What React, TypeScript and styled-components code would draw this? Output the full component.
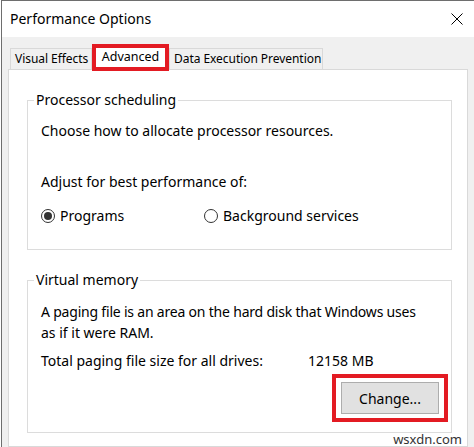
import React from 'react';
import styled, { createGlobalStyle } from 'styled-components';

const FONT = `"Noto Sans", "Open Sans", sans-serif`;
const RED = '#e31b23';

const Global = createGlobalStyle`
  html, body { margin: 0; padding: 0; background: #ffffff; }
  body { font-family: ${FONT}; color: #000; }
  * { box-sizing: border-box; }
`;

const Window = styled.div`
  width: 473px;
  height: 447px;
  margin-left: 1px;
  border-top: 1px solid #6e6e6e;
  border-left: 1px solid #6e6e6e;
  display: flex;
  flex-direction: column;
  overflow: hidden;
  background: #fff;
  font-size: 14px;
`;

const TitleBar = styled.div`
  height: 36px;
  flex: none;
  display: flex;
  align-items: center;
  justify-content: space-between;
  padding: 0 11px 0 8px;
  background: #fff;
`;

const Title = styled.span`
  font-size: 14px;
  line-height: 20px;
  color: #000;
`;

const Body = styled.div`
  flex: 1;
  display: flex;
  flex-direction: column;
  background: #f0f0f0;
  padding: 7px 6px 0 6px;
`;

const TabRow = styled.div`
  display: flex;
  align-items: flex-end;
  height: 25px;
  padding-left: 2px;
  flex: none;
`;

const Tab = styled.div<{ $w: number }>`
  width: ${p => p.$w}px;
  height: 21px;
  border: 1px solid #d9d9d9;
  border-bottom: none;
  background: #f0f0f0;
  line-height: 20px;
  padding-left: 4px;
  white-space: nowrap;
  font-size: 12px;
  letter-spacing: -0.05px;
`;

const ActiveTab = styled.div<{ $w: number }>`
  position: relative;
  z-index: 1;
  width: ${p => p.$w}px;
  height: 27px;
  margin-bottom: -2px;
  border: 4px solid ${RED};
  background: #fff;
  line-height: 17px;
  text-align: center;
  white-space: nowrap;
  font-size: 12.5px;
`;

const Panel = styled.div`
  flex: 1;
  background: #fff;
  border: 1px solid #d9d9d9;
  padding: 21px 15px 0 18px;
  display: flex;
  flex-direction: column;
  gap: 21px;
`;

const Group = styled.fieldset<{ $pb: number }>`
  margin: 0;
  min-width: 0;
  border: 1px solid #dcdcdc;
  padding: 12px 0 ${p => p.$pb}px 13px;
  display: flex;
  flex-direction: column;
`;

const Legend = styled.legend`
  padding: 0 2px;
  margin-left: -7px;
  font-size: 14px;
  line-height: 18px;
  color: #000;
`;

const Line = styled.div<{ $mt?: number; $lh?: number; $ls?: number }>`
  margin-top: ${p => p.$mt ?? 0}px;
  line-height: ${p => p.$lh ?? 20}px;
  letter-spacing: ${p => p.$ls ?? 0}px;
  font-size: 14px;
  white-space: nowrap;
`;

const RadioRow = styled.div`
  display: flex;
  align-items: center;
  height: 20px;
  margin-top: 14px;
`;

const RadioItem = styled.label<{ $w?: number }>`
  display: flex;
  align-items: center;
  gap: 5px;
  width: ${p => (p.$w ? `${p.$w}px` : 'auto')};
  font-size: 14px;
  line-height: 20px;
`;

const RadioCircle = styled.span<{ $checked?: boolean }>`
  width: 14px;
  height: 14px;
  border-radius: 50%;
  border: 1px solid #333;
  display: flex;
  align-items: center;
  justify-content: center;
  flex: none;
  &::after {
    content: '';
    width: 8px;
    height: 8px;
    border-radius: 50%;
    background: ${p => (p.$checked ? '#333' : 'transparent')};
  }
`;

const TotalRow = styled.div`
  display: grid;
  grid-template-columns: 267px auto;
  margin-top: 8px;
  line-height: 20px;
  font-size: 14px;
`;

const ButtonRow = styled.div`
  display: flex;
  justify-content: flex-end;
  margin-top: 3px;
  padding-right: 3px;
`;

const Highlight = styled.div`
  border: 4px solid ${RED};
  padding: 4px 5px;
`;

const Button = styled.button`
  display: block;
  width: 98px;
  height: 32px;
  background: #e1e1e1;
  border: 1px solid #adadad;
  font-family: ${FONT};
  font-size: 14px;
  color: #000;
  padding: 0;
`;

const Watermark = styled.div`
  margin-top: -22px;
  margin-right: -10px;
  text-align: right;
  font-size: 13px;
  line-height: 14px;
  color: #333;
`;

const CloseIcon = () => (
  <svg width="12" height="12" viewBox="0 0 12 12">
    <path d="M0.5 0.5 L11.5 11.5 M11.5 0.5 L0.5 11.5" stroke="#000" strokeWidth="1" fill="none" />
  </svg>
);

export default function App() {
  return (
    <>
      <Global />
      <Window>
        <TitleBar>
          <Title>Performance Options</Title>
          <CloseIcon />
        </TitleBar>
        <Body>
          <TabRow>
            <Tab $w={82}>Visual Effects</Tab>
            <ActiveTab $w={77}>Advanced</ActiveTab>
            <Tab $w={154}>Data Execution Prevention</Tab>
          </TabRow>
          <Panel>
            <Group $pb={23}>
              <Legend>Processor scheduling</Legend>
              <Line>Choose how to allocate processor resources.</Line>
              <Line $mt={31}>Adjust for best performance of:</Line>
              <RadioRow>
                <RadioItem $w={163}>
                  <RadioCircle $checked />
                  Programs
                </RadioItem>
                <RadioItem>
                  <RadioCircle />
                  Background services
                </RadioItem>
              </RadioRow>
            </Group>
            <Group $pb={10}>
              <Legend>Virtual memory</Legend>
              <Line $lh={21} $ls={-0.2}>A paging file is an area on the hard disk that Windows uses</Line>
              <Line $lh={21}>as if it were RAM.</Line>
              <TotalRow>
                <span>Total paging file size for all drives:</span>
                <span>12158 MB</span>
              </TotalRow>
              <ButtonRow>
                <Highlight>
                  <Button>Change...</Button>
                </Highlight>
              </ButtonRow>
            </Group>
            <Watermark>wsxdn.com</Watermark>
          </Panel>
        </Body>
      </Window>
    </>
  );
}
